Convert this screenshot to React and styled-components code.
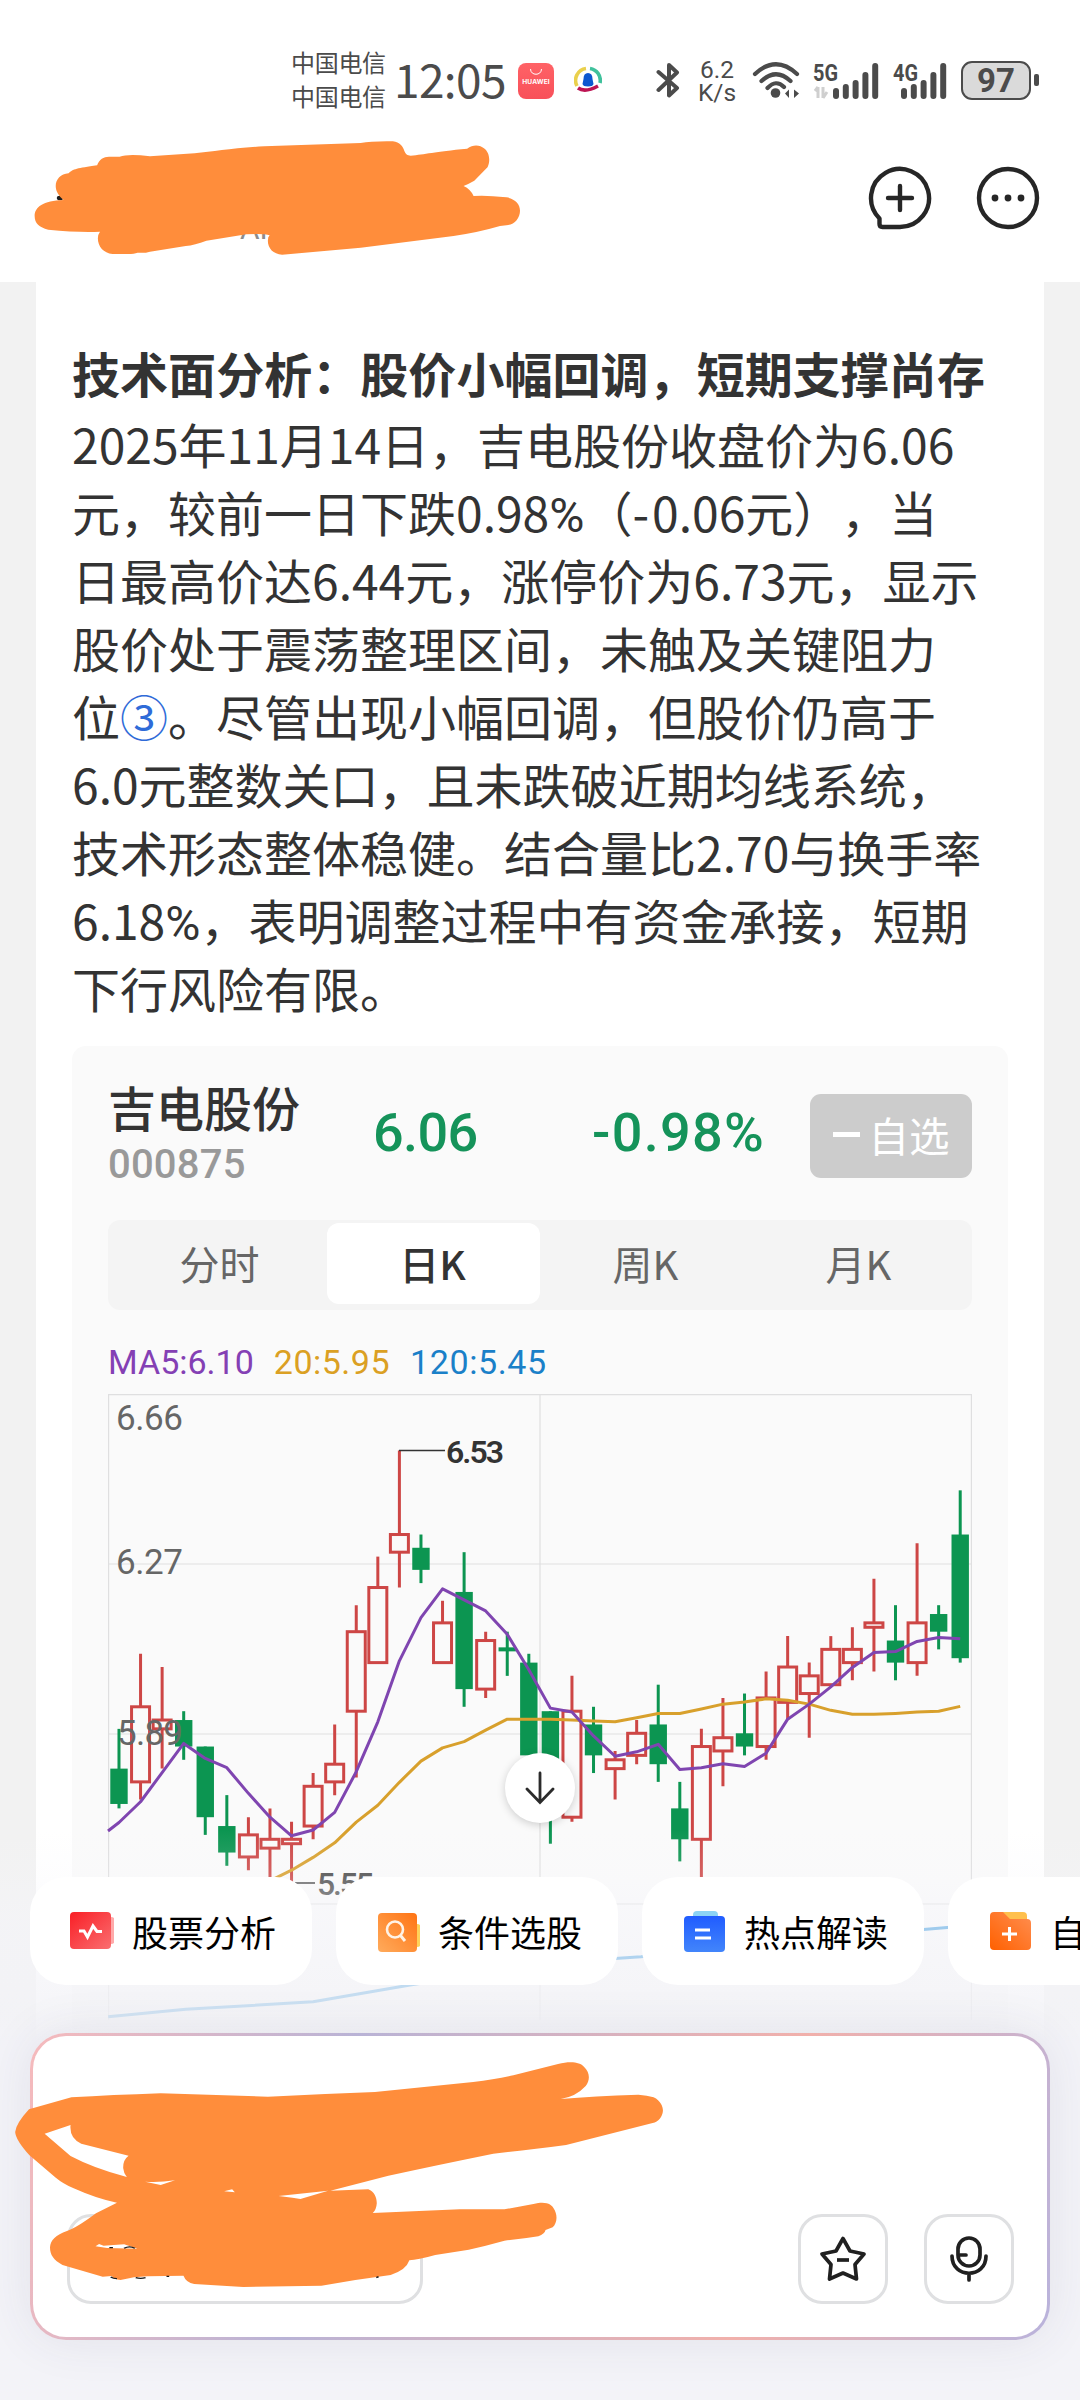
import React from 'react';
import styled, { createGlobalStyle } from 'styled-components';

const GlobalStyle = createGlobalStyle`
	* {
		box-sizing: border-box;
	}
	body {
		margin: 0;
		background: #ffffff;
		font-family: "Noto Sans CJK SC", "Liberation Sans", sans-serif;
		text-spacing-trim: space-all;
	}
`;

const Screen = styled.div`
	position: relative;
	display: flex;
	flex-direction: column;
	width: 1080px;
	height: 2400px;
	overflow: hidden;
	background: #ffffff;
`;

/* status bar */

const StatusBar = styled.div`
	display: flex;
	align-items: center;
	height: 120px;
	padding: 40px 41px 0 291px;
	color: #4b4b4b;
`;

const Carriers = styled.div`
	width: 96px;
	padding-bottom: 3px;
	font-size: 24px;
	line-height: 34px;
	letter-spacing: -0.3px;
	white-space: nowrap;
`;

const Clock = styled.div`
	width: 122px;
	padding: 0 0 4px 7px;
	font-size: 46px;
	line-height: 66px;
	letter-spacing: -0.6px;
	white-space: nowrap;
`;

const HuaweiBadge = styled.div`
	display: flex;
	flex-direction: column;
	align-items: center;
	width: 36px;
	height: 36px;
	padding-top: 5px;
	margin: 2px 20px 0 9px;
	border-radius: 8px;
	background: linear-gradient(#ff6266, #f8505a);
	color: #ffffff;
	font: 700 6.6px/9px "Inter", sans-serif;
	letter-spacing: 0.1px;
`;

const Spacer = styled.div`
	flex: 1;
`;

const NetSpeed = styled.div`
	width: 46px;
	margin: 2px 12px 0 14px;
	font: 400 24.5px/23px "Roboto", sans-serif;
	text-align: center;
`;

const Signal = styled.svg`
	width: 68px;
	height: 38px;
	margin: 1px 0 0 ${(p) => p.$gap}px;
	overflow: visible;
	font: 700 24px "Roboto", sans-serif;
`;

const Battery = styled.div`
	width: 70px;
	height: 39px;
	margin-right: 3px;
	border: 2.5px solid #4b4b4b;
	border-radius: 11px;
	background: #dadada;
	font: 700 33px/35px "Roboto", sans-serif;
	text-align: center;
`;

const BatteryTip = styled.div`
	width: 5px;
	height: 12px;
	border-radius: 2px;
	background: #4b4b4b;
`;

/* title bar */

const TitleBar = styled.div`
	display: flex;
	align-items: center;
	justify-content: flex-end;
	height: 162px;
	padding: 0 39px 6px 0;
	gap: 42px;
`;

const Subtitle = styled.span`
	flex: 1;
	padding: 62px 0 0 240px;
	color: #8c8c8c;
	font: 400 30px/34px "Roboto", sans-serif;
`;

/* article */

const Feed = styled.div`
	flex: 1;
	padding: 0 36px;
	background: #f2f2f2;
`;

const Article = styled.div`
	height: 100%;
	padding: 56px 36px 0;
	background: #ffffff;
	color: #333333;
`;

const Heading = styled.h2`
	margin: 0;
	font-size: 48px;
	font-weight: 700;
	line-height: 68px;
	letter-spacing: 0.05px;
	white-space: nowrap;
`;

const Paragraph = styled.p`
	margin: 3px 0 25px;
	font-size: 48px;
	line-height: 68px;
`;

const Line = styled.span`
	display: block;
	height: 68px;
	white-space: nowrap;
`;

const Percent = styled.span`
	font-family: "Roboto", sans-serif;
`;

const Hyphen = styled.span`
	letter-spacing: 3px;
`;

const Cite = styled.span`
	color: #2f6bd8;
`;

/* quote card */

const Card = styled.div`
	width: 936px;
	height: 1100px;
	padding: 0 36px;
	border-radius: 14px;
	background: #fafafa;
`;

const Quote = styled.div`
	display: flex;
	align-items: center;
	height: 174px;
	padding-top: 5px;
`;

const StockName = styled.div`
	width: 265px;
	padding-bottom: 3px;
	font-size: 48px;
	font-weight: 500;
	line-height: 56px;
`;

const StockCode = styled.div`
	padding-top: 5px;
	color: #999999;
	font: 500 40px/52px "Roboto", sans-serif;
	letter-spacing: 0.2px;
`;

const Figure = styled.div`
	width: ${(p) => p.$width}px;
	padding-bottom: 5px;
	color: #15935a;
	font: 500 54px/60px "Roboto", sans-serif;
	letter-spacing: ${(p) => p.$track}px;
	white-space: nowrap;
`;

const WatchButton = styled.div`
	display: flex;
	align-items: center;
	justify-content: center;
	gap: 9px;
	width: 162px;
	height: 84px;
	padding-bottom: 2px;
	margin-left: auto;
	border-radius: 11px;
	background: #cccccc;
	color: #ffffff;
	font-size: 40.5px;
`;

const Minus = styled.i`
	width: 27px;
	height: 5px;
	background: #ffffff;
`;

const Tabs = styled.div`
	display: grid;
	grid-template-columns: repeat(4, 1fr);
	height: 90px;
	padding: 3px 6px 6px;
	border-radius: 12px;
	background: #f4f4f4;
`;

const Tab = styled.div`
	padding-right: 2px;
	border-radius: 12px;
	background: ${(p) => (p.$active ? '#ffffff' : 'transparent')};
	color: ${(p) => (p.$active ? '#333333' : '#666666')};
	font-size: 40px;
	font-weight: ${(p) => (p.$active ? 500 : 400)};
	line-height: 81px;
	text-align: center;
`;

const Legend = styled.div`
	display: flex;
	gap: 20px;
	height: 84px;
	padding-top: 31px;
	font: 400 34px/42px "Roboto", sans-serif;
`;

const LegendItem = styled.span`
	color: ${(p) => p.$color};
	letter-spacing: ${(p) => p.$track}px;
`;

const ChartSvg = styled.svg`
	display: block;
	overflow: visible;
	font-family: "Roboto", sans-serif;
`;

/* overlays */

const JumpDown = styled.div`
	position: absolute;
	left: 505px;
	top: 1753px;
	display: flex;
	align-items: center;
	justify-content: center;
	width: 70px;
	height: 70px;
	border-radius: 50%;
	background: #ffffff;
	box-shadow: 0 2px 8px rgba(0, 0, 0, 0.18);
`;

const Dock = styled.div`
	position: absolute;
	left: 0;
	right: 0;
	bottom: 0;
	height: 600px;
	padding: 77px 30px 60px;
	background: linear-gradient(
		rgba(244, 244, 249, 0) 30px,
		rgba(245, 245, 250, 0.16) 75px,
		rgba(245, 245, 250, 0.5) 115px,
		rgba(243, 243, 247, 0.82) 215px,
		#f3f3f8 245px
	);
`;

const Chips = styled.div`
	display: flex;
	gap: 24px;
	width: 1050px;
	overflow: hidden;
`;

const Chip = styled.div`
	display: flex;
	flex: none;
	align-items: center;
	gap: 18px;
	height: 108px;
	padding: 0 36px;
	border-radius: 36px;
	background: #ffffff;
	color: #000000;
	font-size: 36px;
`;

const Composer = styled.div`
	display: flex;
	align-items: flex-end;
	gap: 36px;
	height: 307px;
	margin-top: 48px;
	padding: 0 33px 33px 34px;
	border: 3px solid transparent;
	border-radius: 36px;
	background:
		linear-gradient(#ffffff, #ffffff) padding-box,
		linear-gradient(104deg, #f6babc 0, #b9b3d6 30%, #f1b0ab 71%, #b9b3dc 100%) border-box;
	box-shadow: 0 0 50px rgba(60, 60, 90, 0.09);
`;

const ToolButton = styled.div`
	display: flex;
	align-items: center;
	justify-content: center;
	width: ${(p) => p.$width || 90}px;
	height: 90px;
	margin-right: ${(p) => (p.$push ? 'auto' : 0)};
	border: 3px solid #dfe0e2;
	border-radius: 24px;
`;

const Scribble = styled.svg`
	position: absolute;
	left: 0;
	top: ${(p) => p.$top}px;
`;

// prices are in cents: [high, body top, body bottom, low, rising]
const CANDLES = [
	[590, 581, 573, 572, 0], [607, 595, 578, 574, 1], [604, 592, 590, 581, 1], [594, 592, 586, 583, 0],
	[586, 586, 570, 566, 0], [575, 568, 562, 559, 0], [570, 566, 561, 558, 1], [572, 565, 563, 555, 1],
	[569, 565, 564, 555, 1], [580, 577, 568, 565, 1], [591, 582, 578, 575, 1], [618, 612, 594, 579, 1],
	[629, 622, 605, 605, 1], [653, 634, 630, 622, 1], [634, 631, 626, 623, 0], [619, 614, 605, 605, 1],
	[630, 621, 599, 595, 0], [612, 610, 599, 597, 1], [612, 608, 608, 602, 0], [607, 605, 584, 584, 0],
	[594, 594, 573, 564, 0], [602, 594, 570, 569, 1], [595, 591, 584, 580, 0], [585, 583, 581, 574, 1],
	[592, 589, 584, 582, 1], [600, 591, 582, 578, 0], [578, 572, 565, 560, 0], [590, 586, 565, 555, 1],
	[597, 588, 585, 577, 1], [598, 589, 586, 584, 0], [603, 597, 586, 583, 1], [611, 604, 596, 592, 1],
	[605, 602, 598, 588, 1], [611, 608, 600, 600, 1], [613, 608, 605, 601, 1], [624, 614, 613, 603, 1],
	[618, 610, 605, 601, 0], [632, 614, 605, 602, 1], [618, 616, 612, 608, 0], [644, 634, 606, 605, 0],
];

const MA5 = [
	568.8, 573.5, 580.1, 586.7, 583.3, 581.2, 575.4, 570, 565.8, 567.1, 571.1, 580.3, 591.6, 605.4,
	615.2, 621.7, 619.2, 616.7, 611.4, 603.4, 594.7, 593.8, 588.4, 583.8, 584.8, 586.5, 580.8, 581.2,
	582.1, 581.5, 584.5, 592.2, 595.6, 599.5, 603.9, 607.3, 607.5, 609.8, 610.7, 610.4,
].map((v, i) => [i, v]);

const MA20 = [
	555.6, 558, 560.9, 564.2, 568.9, 572.7, 577.9, 582.7, 585.7, 587.1, 589.7, 592.2, 592.2, 592.2,
	592, 591.8, 591.6, 592.5, 593.5, 593.5, 594.5, 595.6, 596.1, 596.8, 596.5, 595.6, 594.2, 593.3,
	593.3, 593.5, 593.8, 594, 595.1,
].map((v, i) => [i + 7, v]);

const MA120 = [
	[-0.5, 524.8], [3.1, 526.5], [9, 528.2], [13.5, 532], [18, 535.5], [23, 538], [24.2, 538.4],
	[30, 541.1], [37.3, 544.6], [39.5, 545.5],
];

const px = (i) => (i + 0.5) * 21.57 + 0.2;
const py = (cents) => 56.6 + (653 - cents) * 4.417;
const toPoints = (list) => list.map(([i, v]) => `${px(i)},${py(v)}`).join(' ');

const Candle = ({ data, index }) => {
	const [high, top, bottom, low, rising] = data;
	const x = px(index);
	const y1 = py(top);
	const y2 = py(bottom);
	if (rising) {
		return (
			<g stroke="#cd4645" strokeWidth="3" fill="none">
				<path d={`M${x} ${py(high)}V${y1}M${x} ${y2}V${py(low)}`} />
				<rect x={x - 9} y={y1} width="18" height={Math.max(y2 - y1, 3)} />
			</g>
		);
	}
	return (
		<g fill="#0c9551">
			<rect x={x - 1.5} y={py(high)} width="3" height={py(low) - py(high)} />
			<rect x={x - 8.7} y={y1 - (y1 === y2 ? 2 : 0)} width="17.4" height={Math.max(y2 - y1, 4)} />
		</g>
	);
};

const KLineChart = () => (
	<ChartSvg width="864" height="626" viewBox="0 0 864 626" fill="none">
		<g stroke="#dfdfe0" strokeWidth="1.2">
			<path d="M0.6 626V0.6H863.4V626" />
			<path d="M432 0V626M0 170H864M0 340H864M0 510H864" />
		</g>
		<g fill="#666666" fontSize="35">
			<text x="8" y="36" textLength="67">6.66</text>
			<text x="8" y="180" textLength="67">6.27</text>
		</g>
		{CANDLES.map((c, i) => <Candle key={i} data={c} index={i} />)}
		<text x="9" y="351" fontSize="35" fill="#666666" textLength="66">5.89</text>
		<g strokeWidth="3" strokeLinejoin="round">
			<polyline points={toPoints(MA120)} stroke="#3a9ade" />
			<polyline points={toPoints(MA20)} stroke="#d8a02c" />
			<polyline points={`0,437 ${toPoints(MA5)}`} stroke="#7f45b0" />
		</g>
		<path d="M291 56.6H337M187 489H207" stroke="#333333" strokeWidth="1.5" />
		<text x="338" y="69" fontSize="32" fontWeight="600" fill="#333333" textLength="58">6.53</text>
		<text x="209" y="501" fontSize="32" fontWeight="500" fill="#4a4a4a" textLength="57">5.55</text>
	</ChartSvg>
);

const BAR_TOPS = [25, 21, 17, 9, 0];

const SignalBars = ({ label, gap, barsX, arrows }) => (
	<Signal $gap={gap} viewBox="0 0 68 38">
		<text x="0" y="18.5" fill="#4b4b4b" textLength="25" lengthAdjust="spacingAndGlyphs">{label}</text>
		{arrows && <path d="M5 25V36M2 29L5 25M10 25V36M10 36L14 30" stroke="#cfcfcf" strokeWidth="3" fill="none" />}
		{BAR_TOPS.map((top, i) => (
			<rect key={i} x={barsX + i * 9.8} y={top + 1} width="6" height={36 - top} rx="3" fill="#4b4b4b" />
		))}
	</Signal>
);

const PulseIcon = () => (
	<svg width="48" height="48" viewBox="0 0 48 48" fill="none">
		<defs>
			<linearGradient id="pulse" x1="0" y1="0" x2="1" y2="1">
				<stop offset="0" stopColor="#f91f26" />
				<stop offset="1" stopColor="#fa6e70" />
			</linearGradient>
		</defs>
		<rect x="12" y="10" width="37" height="27" rx="4" fill="#ffaaaa" />
		<rect x="4" y="5" width="41" height="37" rx="4" fill="url(#pulse)" />
		<path d="M13 24H18L21.500 30L27 19L31 24.500H36" stroke="#ffffff" strokeWidth="3" />
	</svg>
);

const SearchIcon = () => (
	<svg width="48" height="48" viewBox="0 0 48 48" fill="none">
		<defs>
			<linearGradient id="search" x1="1" y1="0" x2="0" y2="1">
				<stop offset="0" stopColor="#ff7414" />
				<stop offset="1" stopColor="#ffab5c" />
			</linearGradient>
		</defs>
		<rect x="20" y="17" width="29" height="23" rx="4" fill="#ffd25a" />
		<rect x="6" y="6" width="39" height="39" rx="4" fill="url(#search)" />
		<circle cx="23" cy="22.500" r="8" stroke="#fff3e6" strokeWidth="2.600" />
		<path d="M28.500 28.500L33 34" stroke="#fff3e6" strokeWidth="3" />
	</svg>
);

const NoteIcon = () => (
	<svg width="48" height="48" viewBox="0 0 48 48" fill="none">
		<defs>
			<linearGradient id="note" x1="0" y1="0" x2="0" y2="1">
				<stop offset="0" stopColor="#205cff" />
				<stop offset="1" stopColor="#4285fb" />
			</linearGradient>
		</defs>
		<rect x="15" y="4" width="25" height="20" rx="4" fill="#8bd3f5" />
		<rect x="6" y="9" width="41" height="36" rx="4" fill="url(#note)" />
		<path d="M17 23H32M17 31H33" stroke="#ffffff" strokeWidth="2.800" />
	</svg>
);

const FolderIcon = () => (
	<svg width="48" height="48" viewBox="0 0 48 48" fill="none">
		<defs>
			<linearGradient id="folder" x1="0" y1="1" x2="1" y2="0">
				<stop offset="0" stopColor="#ff6000" />
				<stop offset="1" stopColor="#ff8f52" />
			</linearGradient>
		</defs>
		<rect x="14" y="5" width="29" height="20" rx="4" fill="#ffc04d" />
		<path d="M10 5H19L26 12H43Q47 12 47 16V39Q47 43 43 43H10Q6 43 6 39V9Q6 5 10 5Z" fill="url(#folder)" />
		<path d="M18 27H33M25.500 20V34" stroke="#ffffff" strokeWidth="3" />
	</svg>
);

const chips = [
	{ label: '股票分析', Icon: PulseIcon },
	{ label: '条件选股', Icon: SearchIcon },
	{ label: '热点解读', Icon: NoteIcon },
	{ label: '自选股', Icon: FolderIcon },
];

export default function App() {
	return (
		<Screen>
			<GlobalStyle />
			<StatusBar>
				<Carriers>中国电信<br />中国电信</Carriers>
				<Clock>12:05</Clock>
				<HuaweiBadge>
					<svg width="14" height="10" viewBox="0 0 14 10" fill="none" stroke="#ffffff">
						<path d="M1.500 1C1.500 8 12.500 8 12.500 1" />
					</svg>
					HUAWEI
				</HuaweiBadge>
				<svg width="28" height="28" viewBox="0 0 28 28" fill="none" strokeWidth="3.600">
					<path d="M3 20A12 12 0 0 1 12 2.500" stroke="#ead04c" />
					<path d="M16 2.500A12 12 0 0 1 26 17" stroke="#3fc19c" />
					<path d="M4 22Q11 27 24 20" stroke="#bd1453" />
					<path d="M14 7Q18.500 7 18.500 13L19.500 18Q19 20.500 14 20.500T8.500 18L9.500 13Q9.500 7 14 7Z" fill="#0c57d0" />
				</svg>
				<Spacer />
				<svg width="24" height="38" viewBox="0 0 24 38" fill="none" stroke="#4b4b4b" strokeWidth="4" strokeLinecap="round" strokeLinejoin="round">
					<path d="M2.500 11L21 27L13 34.500V4L21 11.500L2.500 29" />
				</svg>
				<NetSpeed>6.2<br />K/s</NetSpeed>
				<svg width="48" height="38" viewBox="0 0 48 38" fill="none" stroke="#4b4b4b" strokeWidth="4.200" strokeLinecap="round">
					<path d="M3 13Q24 -6.500 45 13M9.500 20Q24 6.500 38.500 20M15.500 27Q24 18 32 26" />
					<circle cx="23.500" cy="32" r="4.800" fill="#4b4b4b" stroke="none" />
					<path d="M33 32.500L37 28.500V37ZM47 32.500L42 37V28.500Z" fill="#4b4b4b" stroke="none" />
				</svg>
				<SignalBars label="5G" gap={13} barsX={20} arrows />
				<SignalBars label="4G" gap={12} barsX={8} />
				<Battery>97</Battery>
				<BatteryTip />
			</StatusBar>

			<TitleBar>
				<Subtitle>AI</Subtitle>
				<svg width="66" height="66" viewBox="0 0 66 66" fill="none" stroke="#262626" strokeWidth="4.400" strokeLinecap="round" strokeLinejoin="round">
					<path d="M33 62H15.500Q12.500 62 12.500 59V53.500A29 29 0 1 1 33 62Z" />
					<path d="M33 21V45M21 33H45" />
				</svg>
				<svg width="66" height="66" viewBox="0 0 66 66" fill="none">
					<circle cx="33" cy="33" r="29" stroke="#262626" strokeWidth="4.400" />
					<g fill="#262626">
						<circle cx="20" cy="33" r="3.400" />
						<circle cx="33" cy="33" r="3.400" />
						<circle cx="46" cy="33" r="3.400" />
					</g>
				</svg>
			</TitleBar>

			<Feed>
				<Article>
					<Heading>技术面分析：股价小幅回调，短期支撑尚存</Heading>
					<Paragraph>
						<Line>2025年11月14日，吉电股份收盘价为6.06</Line>
						<Line>元，较前一日下跌0.98<Percent>%</Percent>（<Hyphen>-</Hyphen>0.06元），当</Line>
						<Line>日最高价达6.44元，涨停价为6.73元，显示</Line>
						<Line>股价处于震荡整理区间，未触及关键阻力</Line>
						<Line>位<Cite>③</Cite>。尽管出现小幅回调，但股价仍高于</Line>
						<Line>6.0元整数关口，且未跌破近期均线系统，</Line>
						<Line>技术形态整体稳健。结合量比2.70与换手率</Line>
						<Line>6.18<Percent>%</Percent>，表明调整过程中有资金承接，短期</Line>
						<Line>下行风险有限。</Line>
					</Paragraph>

					<Card>
						<Quote>
							<StockName>
								吉电股份
								<StockCode>000875</StockCode>
							</StockName>
							<Figure $width={219} $track={-0.6}>6.06</Figure>
							<Figure $track={1.3}>-0.98%</Figure>
							<WatchButton><Minus />自选</WatchButton>
						</Quote>
						<Tabs>
							<Tab>分时</Tab>
							<Tab $active>日K</Tab>
							<Tab>周K</Tab>
							<Tab>月K</Tab>
						</Tabs>
						<Legend>
							<LegendItem $color="#8440b4" $track={0}>MA5:6.10</LegendItem>
							<LegendItem $color="#dba023" $track={0.5}>20:5.95</LegendItem>
							<LegendItem $color="#1a80c8" $track={0.6}>120:5.45</LegendItem>
						</Legend>
						<KLineChart />
					</Card>
				</Article>
			</Feed>

			<JumpDown>
				<svg width="32" height="34" viewBox="0 0 32 34" fill="none" stroke="#2b2b2b" strokeWidth="2.800" strokeLinecap="round">
					<path d="M16 2V31M3 18L16 31.500L29 18" />
				</svg>
			</JumpDown>

			<Dock>
				<Chips>
					{chips.map(({ label, Icon }) => (
						<Chip key={label}><Icon />{label}</Chip>
					))}
				</Chips>
				<Composer>
					<ToolButton $width={356} $push />
					<ToolButton>
						<svg width="52" height="52" viewBox="0 0 52 52" fill="none" stroke="#202020" strokeWidth="3.700" strokeLinejoin="round">
							<path d="M26 5.500L33 18L47 21L38 31.500L39.500 46L26 40L12.500 46L14 31.500L5 21L19 18Z" />
							<path d="M20 27H32" />
						</svg>
					</ToolButton>
					<ToolButton>
						<svg width="52" height="52" viewBox="0 0 52 52" fill="none" stroke="#202020" strokeWidth="3.700" strokeLinecap="round">
							<rect x="15" y="5" width="22" height="28" rx="11" />
							<path d="M9 23C9 46 43 46 43 23M26 41V47M17 22H23" />
						</svg>
					</ToolButton>
				</Composer>
			</Dock>

			<Scribble $top={120} width="560" height="180" viewBox="0 0 1568 540" preserveAspectRatio="none">
				<ellipse cx="168" cy="234" rx="9" ry="7" fill="#1c1c1c" />
				<path
					fill="#ff8d3b"
					d="M135 329C110 322 97 310 97 288C97 262 120 242 178 240C165 228 156 215 156 198C156 178 170 162 192 160C205 147 215 145 272 136C278 118 290 110 305 110L335 110Q360 100 420 109L545 100C600 95 650 84 740 79L1010 69Q1040 63 1100 64C1120 66 1128 80 1132 92C1136 102 1140 106 1150 107C1190 103 1215 95 1308 86C1325 72 1345 75 1355 85C1372 98 1373 125 1365 142L1328 182Q1310 193 1298 198Q1318 208 1326 228Q1360 225 1418 232C1442 236 1456 252 1456 272C1456 295 1440 314 1418 316L1400 318Q1340 337 1270 348L1010 383L790 404C765 402 750 385 750 362Q750 350 755 346Q740 340 690 343L578 362Q545 375 520 378L420 395Q405 400 385 398Q375 403 350 402L315 402C290 400 274 380 274 355Q274 343 280 335Q220 338 135 329Z"
				/>
			</Scribble>
			<Scribble $top={2010} width="700" height="390" viewBox="0 0 1568 1170" preserveAspectRatio="none">
				<path
					fill="#ff8d3b"
					fillRule="evenodd"
					d="M160 262Q250 255 360 250L600 260Q720 252 840 246L1060 216Q1110 208 1150 196L1250 162C1280 152 1300 158 1308 170C1322 188 1322 210 1312 228Q1290 260 1256 267Q1330 258 1430 254Q1450 256 1464 262C1480 272 1485 290 1485 302C1484 320 1475 335 1462 339L1268 405Q1180 420 1105 431Q980 465 870 497L740 542Q780 541 825 538C838 545 844 562 844 580Q843 600 835 609L1030 598L1130 598L1195 582C1225 572 1236 585 1240 595C1250 615 1248 640 1238 652L1222 660Q1220 672 1206 679Q1170 687 1130 692Q1090 707 1050 719L975 735Q935 750 917 751Q910 780 875 795Q800 808 720 827L545 831L435 822Q417 818 411 797L330 799Q300 800 270 810Q255 808 250 798L230 800L140 765C120 750 112 735 112 712C113 690 125 675 150 663Q170 655 215 610L262 578Q220 568 165 535Q140 520 125 503L66 436Q35 390 34 366Q36 340 65 298Z
						M100 371L158 345Q155 385 182 401L288 437Q275 450 276 475Q277 490 284 501Q210 475 158 438Z
						M325 515Q355 518 392 511L360 525Z
						M502 544L520 538L526 547Z
						M624 558L735 542L673 567L655 563Z
						M214 709L222 702L232 707L278 703L308 716L240 714Z"
				/>
				<path
					fill="none"
					stroke="#1c1c1c"
					strokeWidth="4"
					d="M245 713H253M278 715Q290 706 302 715M248 801Q254 806 262 806M304 803Q315 807 326 803M373 799H379M843 803L848 800"
				/>
			</Scribble>
		</Screen>
	);
}
